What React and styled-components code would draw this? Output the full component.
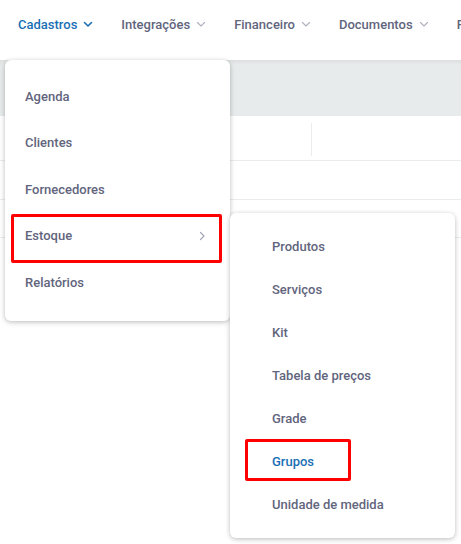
import styled, { createGlobalStyle } from 'styled-components';

const GlobalStyle = createGlobalStyle`
    html, body {
        margin: 0;
        padding: 0;
        background: #ffffff;
        font-family: Roboto, "Liberation Sans", sans-serif;
    }
`;

const Stage = styled.div`
    position: relative;
    width: 461px;
    height: 544px;
    overflow: hidden;
    background: #ffffff;
`;

const NavBar = styled.nav`
    height: 60px;
    display: flex;
    align-items: center;
    padding-left: 18px;
    gap: 28px;
    white-space: nowrap;
    box-sizing: border-box;
`;

const NavItem = styled.div`
    display: flex;
    align-items: center;
    gap: 6px;
    font-size: 13px;
    font-weight: 500;
    color: ${p => (p.$active ? '#1a6fb4' : '#62657d')};
    flex-shrink: 0;
    margin-bottom: 12px;
`;

const Band = styled.div`
    height: 56px;
    background: #e8ebeb;
    box-shadow: inset 0 4px 4px -2px rgba(0, 0, 0, 0.06);
`;

const TableRow = styled.div`
    display: flex;
    height: ${p => p.$h}px;
    border-bottom: 1px solid #ebeced;
    box-sizing: border-box;
`;

const Cell = styled.div`
    width: ${p => p.$w}px;
    flex-shrink: 0;
    margin: 7px 0 4px;
    border-right: ${p => (p.$divider ? '1px solid #ebeced' : 'none')};
`;

const Menu = styled.div`
    position: absolute;
    left: ${p => p.$left}px;
    top: ${p => p.$top}px;
    width: 225px;
    padding: ${p => p.$pad};
    background: #ffffff;
    border-radius: 6px;
    box-shadow: 0 1px 4px rgba(0, 0, 0, 0.22), 0 2px 8px rgba(0, 0, 0, 0.06);
    box-sizing: border-box;
`;

const MenuItem = styled.div`
    display: flex;
    align-items: center;
    justify-content: space-between;
    height: ${p => p.$h}px;
    padding: 0 14px;
    margin-left: 6px;
    width: 210px;
    box-sizing: border-box;
    font-size: 13px;
    font-weight: 500;
    color: #62657d;
`;

const SubItem = styled.div`
    display: flex;
    align-items: center;
    height: 43px;
    padding-left: 42px;
    font-size: 13px;
    font-weight: 500;
    color: ${p => (p.$active ? '#1a6fb4' : '#62657d')};
`;

const Highlight = styled.span`
    position: absolute;
    left: ${p => p.$left}px;
    top: ${p => p.$top}px;
    width: ${p => p.$w}px;
    height: ${p => p.$h}px;
    border: 3px solid #ff0000;
    border-radius: 2px;
    box-sizing: border-box;
    pointer-events: none;
`;

const Chevron = ({ dir = 'down', color = '#9a9db0', size = 10, weight = 1.2 }) => (
    <svg width={size} height={size} viewBox="0 0 10 10" fill="none">
        {dir === 'down' ? (
            <path d="M1.5 3.5 L5 7 L8.5 3.5" stroke={color} strokeWidth={weight} strokeLinecap="round" strokeLinejoin="round" />
        ) : (
            <path d="M3.5 1.5 L7 5 L3.5 8.5" stroke={color} strokeWidth={weight} strokeLinecap="round" strokeLinejoin="round" />
        )}
    </svg>
);

const navItems = ['Cadastros', 'Integrações', 'Financeiro', 'Documentos', 'Fiscal'];
const menuItems = ['Agenda', 'Clientes', 'Fornecedores', 'Estoque', 'Relatórios'];
const subItems = ['Produtos', 'Serviços', 'Kit', 'Tabela de preços', 'Grade', 'Grupos', 'Unidade de medida'];

const App = () => {
    return (
        <Stage>
            <GlobalStyle />
            <NavBar>
                {navItems.map((label, i) => (
                    <NavItem key={label} $active={i === 0}>
                        {label}
                        <Chevron
                            color={i === 0 ? '#1a6fb4' : '#aeb1be'}
                            weight={i === 0 ? 1.6 : 1.1}
                        />
                    </NavItem>
                ))}
            </NavBar>
            <Band />
            <TableRow $h={45}>
                <Cell $w={311} $divider />
                <Cell $w={150} />
            </TableRow>
            <TableRow $h={39} />
            <TableRow $h={38} />

            <Menu $left={5} $top={60} $pad="13px 0 15px">
                {menuItems.map(label => (
                    <MenuItem key={label} $h={46.5}>
                        {label}
                        {label === 'Estoque' && <Chevron dir="right" color="#a4a7b6" />}
                    </MenuItem>
                ))}
            </Menu>
            <Highlight $left={11} $top={214} $w={211} $h={49} />

            <Menu $left={230} $top={213} $pad="11.5px 0 12.5px">
                {subItems.map(label => (
                    <SubItem key={label} $active={label === 'Grupos'}>
                        {label}
                    </SubItem>
                ))}
            </Menu>
            <Highlight $left={245} $top={439} $w={106} $h={42} />
        </Stage>
    );
};

export default App;
